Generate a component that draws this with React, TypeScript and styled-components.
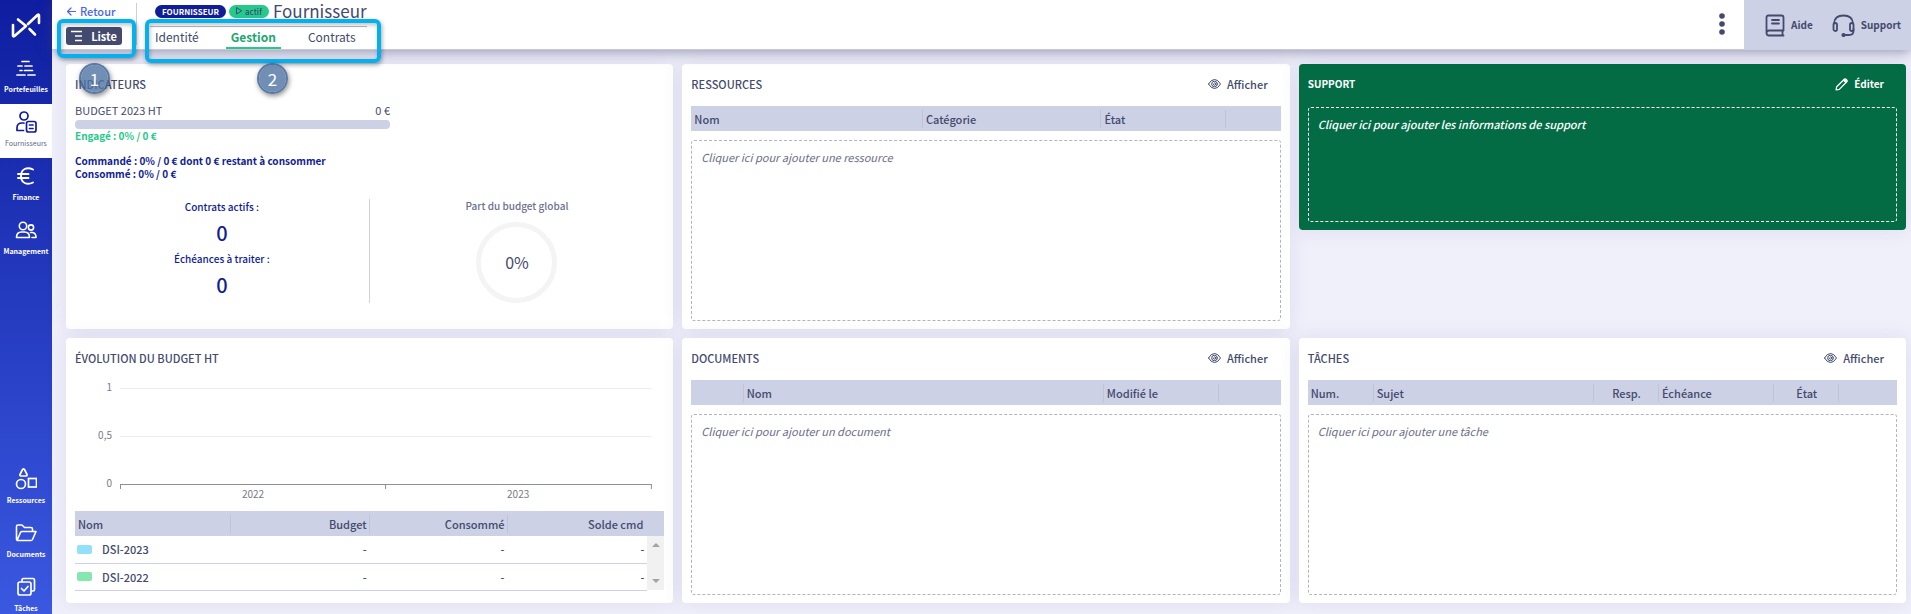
import React from "react";
import styled, { createGlobalStyle, css } from "styled-components";

const ink = "#434a6d";
const navy = "#101d96";
const green = "#27c98a";
const lavender = "#cdd1e6";

const GlobalStyle = createGlobalStyle`
  *, *::before, *::after { box-sizing: border-box; }
  body {
    margin: 0;
    background: #f0f0fb;
    color: ${ink};
    font-family: "Noto Sans CJK SC", "Noto Sans", sans-serif;
    font-size: 11px;
    line-height: 16px;
  }
  button { font: inherit; color: inherit; background: none; border: 0; padding: 0; cursor: pointer; }
  a { color: inherit; text-decoration: none; }
  h1, h2, p, dl, dd { margin: 0; font-weight: 400; }
  svg { display: block; flex: none; }
`;

const Page = styled.div`
  display: flex;
  min-height: 100vh;
`;

/* ---------- Sidebar ---------- */

const Sidebar = styled.nav`
  width: 52px;
  flex: none;
  display: flex;
  flex-direction: column;
  background: linear-gradient(#0f1ea0, #3a58e0);
`;

const LogoLink = styled.a`
  height: 50px;
  display: flex;
  align-items: center;
  justify-content: center;
`;

const NavGroup = styled.div<{ $bottom?: boolean }>`
  display: flex;
  flex-direction: column;
  ${(p) => p.$bottom && css`
    margin-top: auto;
    a:last-child { height: 45px; }
  `}
`;

const NavItem = styled.a<{ $active?: boolean }>`
  height: 54px;
  padding-top: 7px;
  display: flex;
  flex-direction: column;
  align-items: center;
  gap: 4px;
  font-size: 7px;
  line-height: 12px;
  font-weight: ${(p) => (p.$active ? 400 : 700)};
  color: ${(p) => (p.$active ? "#5d648a" : "#fff")};
  background: ${(p) => (p.$active ? "#fff" : "transparent")};
  svg { color: ${(p) => (p.$active ? navy : "#fff")}; }
`;

/* ---------- Header ---------- */

const Body = styled.div`
  flex: 1;
  min-width: 0;
  display: flex;
  flex-direction: column;
`;

const Header = styled.header`
  position: relative;
  z-index: 1;
  height: 50px;
  display: flex;
  background: #fff;
  border-bottom: 1px solid #c9c9d8;
  box-shadow: 0 2px 12px rgba(60, 60, 110, 0.5);
`;

const BackColumn = styled.div`
  width: 85px;
  margin: 3px 0 4px;
  padding-left: 14px;
  display: flex;
  flex-direction: column;
  align-items: flex-start;
  justify-content: space-between;
  border-right: 1px solid #cfcfd8;
`;

const BackLink = styled.a`
  display: flex;
  align-items: center;
  gap: 4px;
  padding-left: 1px;
  font-weight: 500;
  color: #4a66e8;
`;

const ListButton = styled.button`
  height: 18px;
  width: 56px;
  display: flex;
  align-items: center;
  justify-content: center;
  gap: 8px;
  border-radius: 3px;
  background: ${ink};
  color: #fff;
  font-weight: 700;
`;

const TitleColumn = styled.div`
  padding-left: 13px;
  display: flex;
  flex-direction: column;
`;

const TitleRow = styled.div`
  height: 27px;
  padding: 0 0 4px 5px;
  display: flex;
  align-items: center;
  gap: 3px;
  border-bottom: 1px solid #b9b9c0;
`;

const Badge = styled.span<{ $green?: boolean }>`
  height: 13px;
  padding: 0 7px;
  display: flex;
  align-items: center;
  gap: 3px;
  border-radius: 7px;
  font-size: 8px;
  line-height: 13px;
  font-weight: ${(p) => (p.$green ? 500 : 700)};
  color: ${(p) => (p.$green ? "#32507a" : "#fff")};
  background: ${(p) => (p.$green ? green : navy)};
`;

const Title = styled.h1`
  padding-left: 1px;
  font-size: 17px;
  line-height: 22px;
`;

const Tabs = styled.nav`
  flex: 1;
  display: flex;
  gap: 22px;
`;

const Tab = styled.a<{ $active?: boolean }>`
  padding: 0 5px;
  display: flex;
  align-items: center;
  line-height: 20px;
  font-size: 12px;
  font-weight: ${(p) => (p.$active ? 700 : 400)};
  color: ${(p) => (p.$active ? "#1ca76f" : ink)};
  border-bottom: 2px solid ${(p) => (p.$active ? green : "transparent")};
`;

const MoreButton = styled.button`
  width: 30px;
  margin: 0 7px 10px auto;
  display: flex;
  flex-direction: column;
  align-items: center;
  padding-top: 13px;
`;

const HelpBar = styled.div`
  width: 167px;
  height: 50px;
  padding: 0 10px 0 21px;
  display: flex;
  align-items: center;
  justify-content: space-between;
  background: ${lavender};
  font-size: 10px;
  font-weight: 700;
`;

const HelpLink = styled.a`
  display: flex;
  align-items: center;
  gap: 6px;
`;

/* ---------- Guide callouts lying over the header ---------- */

const Outline = styled.div<{ $left: number; $width: number; $height: number }>`
  position: absolute;
  top: 19px;
  left: ${(p) => p.$left}px;
  width: ${(p) => p.$width}px;
  height: ${(p) => p.$height}px;
  border: 4px solid #05b0ee;
  border-radius: 6px;
  box-shadow: 1px 2px 4px rgba(0, 0, 0, 0.35), inset 1px 2px 4px rgba(0, 0, 0, 0.25);
  pointer-events: none;
`;

const Step = styled.span<{ $left: number }>`
  position: absolute;
  top: 63px;
  left: ${(p) => p.$left}px;
  width: 31px;
  height: 31px;
  border: 2px solid rgba(62, 97, 146, 0.85);
  border-radius: 50%;
  background: rgba(78, 115, 163, 0.8);
  background-clip: padding-box;
  box-shadow: 1px 2px 5px rgba(0, 0, 0, 0.45);
  color: #fff;
  font-size: 17px;
  line-height: 27px;
  text-align: center;
`;

/* ---------- Cards ---------- */

const Board = styled.main`
  flex: 1;
  padding: 14px 5px 11px 14px;
  display: grid;
  grid-template-columns: repeat(3, minmax(0, 1fr));
  grid-template-rows: 1fr 1fr;
  gap: 9px;
`;

const CardBox = styled.section<{ $support?: boolean }>`
  min-width: 0;
  padding: 10px 9px 8px;
  display: flex;
  flex-direction: column;
  border-radius: 4px;
  background: ${(p) => (p.$support ? "#036c45" : "#fff")};
  color: ${(p) => (p.$support ? "#fff" : ink)};
  align-self: ${(p) => (p.$support ? "start" : "stretch")};
  box-shadow: 0 0 20px rgba(80, 80, 150, 0.12);
`;

const CardHead = styled.div<{ $strong?: boolean }>`
  height: 20px;
  padding-right: 13px;
  display: flex;
  align-items: center;
  justify-content: space-between;
  font-size: ${(p) => (p.$strong ? 10 : 11)}px;
  font-weight: ${(p) => (p.$strong ? 700 : 500)};
  h2 { font: inherit; }
`;

const CardAction = styled.button`
  display: flex;
  align-items: center;
  gap: 6px;
`;

const AddBox = styled.button<{ $support?: boolean }>`
  flex: 1;
  min-height: 115px;
  margin-top: ${(p) => (p.$support ? 13 : 9)}px;
  padding: 8px 9px;
  display: flex;
  align-items: flex-start;
  justify-content: flex-start;
  text-align: left;
  border: 1px dashed ${(p) => (p.$support ? "#fff" : "#b4b4bd")};
  border-radius: 3px;
  font-style: italic;
  font-weight: ${(p) => (p.$support ? 500 : 400)};
  color: ${(p) => (p.$support ? "#fff" : "#696e86")};
`;

const Table = styled.table`
  width: 100%;
  margin-top: 12px;
  table-layout: fixed;
  border-collapse: collapse;
`;

const Th = styled.th<{ $align?: string; $overScroll?: boolean }>`
  height: 25px;
  padding: 0 ${(p) => (p.$overScroll ? 21 : 3)}px 0 3px;
  text-align: ${(p) => p.$align ?? "left"};
  font-weight: 500;
  background: linear-gradient(#bfc4dd, #bfc4dd) right center / 1px 18px no-repeat ${lavender};
  &:last-child { background: ${lavender}; }
`;

const Td = styled.td<{ $align?: string }>`
  height: 27px;
  padding: 0 3px 0 2px;
  text-align: ${(p) => p.$align ?? "left"};
  font-weight: 500;
  border-bottom: 1px solid ${lavender};
`;

const ScrollCell = styled.td`
  padding: 0;
  background: #f1f1f1;
  color: #a3a3a3;
`;

const ScrollTrack = styled.div`
  height: 54px;
  padding: 7px 0;
  display: flex;
  flex-direction: column;
  align-items: center;
  justify-content: space-between;
`;

const SeriesName = styled.span`
  display: flex;
  align-items: center;
  gap: 10px;
`;

const Swatch = styled.span<{ $color: string }>`
  width: 15px;
  height: 9px;
  border-radius: 2px;
  background: ${(p) => p.$color};
`;

/* ---------- Indicators ---------- */

const Budget = styled.div`
  width: 315px;
  margin-top: 9px;
`;

const BudgetLine = styled.div`
  display: flex;
  justify-content: space-between;
  line-height: 15px;
  padding-bottom: 2px;
`;

const BudgetBar = styled.div`
  height: 9px;
  border-radius: 4px;
  background: ${lavender};
`;

const Amounts = styled.p<{ $green?: boolean }>`
  margin-bottom: 12px;
  font-size: 10px;
  line-height: 13px;
  font-weight: 700;
  color: ${(p) => (p.$green ? green : navy)};
`;

const Halves = styled.div`
  margin-top: 7px;
  height: 104px;
  display: grid;
  grid-template-columns: 1fr 1fr;
  font-size: 10px;
  font-weight: 500;
`;

const Counts = styled.dl`
  border-right: 1px solid ${lavender};
  text-align: center;
  color: ${navy};
  font-weight: 500;
  dt { line-height: 16px; }
  dd { font-size: 20px; line-height: 36px; font-weight: 500; }
`;

const Share = styled.div`
  display: flex;
  flex-direction: column;
  align-items: center;
  gap: 10px;
  line-height: 13px;
  color: #6d7190;
`;

const Ring = styled.div`
  width: 81px;
  height: 81px;
  display: flex;
  align-items: center;
  justify-content: center;
  border: 5px solid #f4f4f4;
  border-radius: 50%;
  font-size: 16px;
  font-weight: 400;
  color: ${ink};
`;

const Chart = styled.svg`
  width: 100%;
  height: 135px;
  margin-bottom: -4px;
  font-size: 10px;
  fill: #777a85;
`;

/* ---------- Icons ---------- */

const stroke = { fill: "none", stroke: "currentColor", strokeLinecap: "round", strokeLinejoin: "round" } as const;

const Logo = () => (
  <svg width="30" height="27" viewBox="0 0 30 27" {...stroke} stroke="#fff" strokeWidth="2.6">
    <path d="M2 13v10.500q0 1.500 1.500.5L15 14 7 7.500M17 12 26.500 3q1.500-1 1.500.5V11M18.500 17l5.500 5.500" />
  </svg>
);
const PortfolioIcon = () => (
  <svg width="22" height="22" viewBox="0 0 22 22" {...stroke} strokeWidth="1.700">
    <path d="M7 4.500h7M3 9h4M10 9h7M5 13.500h2M9.500 13.500h8M2 18h8M13 18h7" />
  </svg>
);
const SupplierIcon = () => (
  <svg width="22" height="22" viewBox="0 0 22 22" {...stroke} strokeWidth="1.700">
    <circle cx="9" cy="5" r="4" />
    <path d="M8.500 19.500H2V17q0-5 5-5h2" />
    <rect x="11.500" y="10.500" width="9.500" height="10.500" rx="2" />
    <path d="M14.500 14h3.500M14.500 17.500h3.500" />
  </svg>
);
const EuroIcon = () => (
  <svg width="22" height="22" viewBox="0 0 22 22" {...stroke} strokeWidth="1.900">
    <path d="M18 4.500C12 1.500 6 4 6 11s6 9.500 12 6.500M3 9h10.500M3 13h10.500" />
  </svg>
);
const PeopleIcon = () => (
  <svg width="22" height="22" viewBox="0 0 22 22" {...stroke} strokeWidth="1.600">
    <circle cx="8" cy="7" r="3.700" />
    <path d="M1.500 18.500q0-5.500 5-5.500h3q5 0 5 5.500zM17 18.500h4q0-4.500-3.500-5h-2" />
    <circle cx="16" cy="8.500" r="2.600" />
  </svg>
);
const ShapesIcon = () => (
  <svg width="22" height="22" viewBox="0 0 22 22" {...stroke} strokeWidth="1.700">
    <path d="M7.500 1.500Q8.500.5 9.500 1.500L12 6.500Q12.500 8 11 8H6Q4.500 8 5 6.500z" />
    <circle cx="6" cy="16" r="4.500" />
    <rect x="13.500" y="10.500" width="8" height="8.500" strokeLinejoin="miter" />
  </svg>
);
const FolderIcon = () => (
  <svg width="22" height="22" viewBox="0 0 22 22" {...stroke} strokeWidth="1.600">
    <path d="M1.500 17.500V4.500q0-1.500 1.500-1.500h4l2.500 2.500H16q1.500 0 1.500 1.500v2M2 18.500 5.500 10.500q.5-1 1.500-1H21l-3.500 8q-.5 1-1.500 1z" />
  </svg>
);
const TasksIcon = () => (
  <svg width="22" height="22" viewBox="0 0 22 22" {...stroke} strokeWidth="1.700">
    <rect x="3" y="6" width="13" height="13" rx="2" />
    <path d="M7 5.500V4q0-1.500 1.500-1.500H18q1.500 0 1.500 1.500v9.500q0 1.500-1.500 1.500h-1M6.500 12.500l2.500 2.500 4-4.500" />
  </svg>
);
const EyeIcon = () => (
  <svg width="13" height="12" viewBox="0 0 13 12" {...stroke} strokeWidth="1">
    <path d="M.5 6Q3 1.500 6.500 1.500T12.500 6Q10 10.500 6.500 10.500T.5 6z" />
    <circle cx="6.500" cy="6" r="2.800" />
    <path d="M6.500 4.800a1.200 1.200 0 1 1-1.200 1.200" />
  </svg>
);
const PencilIcon = () => (
  <svg width="13" height="13" viewBox="0 0 13 13" {...stroke} strokeWidth="1.200">
    <path d="M1 12l.7-3.300L8.500 2l2.500 2.500-6.700 6.800z" />
    <path d="M8.500 2l1-1q.7-.5 1.500.2l.8.8q.7.8.2 1.500l-1 1z" fill="currentColor" />
  </svg>
);
const BookIcon = () => (
  <svg width="20" height="23" viewBox="0 0 20 23" {...stroke} strokeWidth="1.800">
    <path d="M18.500 21.500H4q-2.500 0-2.500-2.500V3.500q0-2 2-2h13q2 0 2 2V16.500H4q-2.500 0-2.500 2.500M17.500 17v4M7 6h7M7 9.500h7" />
  </svg>
);
const HeadsetIcon = () => (
  <svg width="23" height="23" viewBox="0 0 23 23" {...stroke} strokeWidth="1.800">
    <path d="M2 9.500Q2.500 1.500 11.500 1.500T21 9.500M21.500 15v2q0 4-4.500 4h-4" />
    <rect x="1.500" y="9" width="3.500" height="8" rx="1.750" />
    <rect x="18" y="9" width="3.500" height="8" rx="1.750" />
    <circle cx="11.500" cy="21" r="1.200" fill="currentColor" />
  </svg>
);
const BackArrow = () => (
  <svg width="9" height="9" viewBox="0 0 9 9" {...stroke} strokeWidth="1.200">
    <path d="M8.500 4.500h-8M4 1 .5 4.500 4 8" />
  </svg>
);
const ListIcon = () => (
  <svg width="12" height="12" viewBox="0 0 12 12" {...stroke} strokeLinecap="butt" strokeWidth="1.500">
    <path d="M0 1.500h11M4 6h7M4 10.500h7" />
  </svg>
);
const PlayIcon = () => (
  <svg width="6" height="8" viewBox="0 0 6 8" {...stroke} strokeWidth="1">
    <path d="M.5 1v6l5-3z" />
  </svg>
);
const DotsIcon = () => (
  <svg width="6" height="22" viewBox="0 0 6 22" fill={ink}>
    <circle cx="3" cy="3" r="2.800" />
    <circle cx="3" cy="11" r="2.800" />
    <circle cx="3" cy="19" r="2.800" />
  </svg>
);
const ScrollArrow = ({ down }: { down?: boolean }) => (
  <svg width="8" height="4" viewBox="0 0 8 4" fill="currentColor">
    <path d={down ? "M0 0h8L4 4z" : "M0 4h8L4 0z"} />
  </svg>
);

/* ---------- Parts ---------- */

type Column = { label: string; width: string; align?: string };

const HeadRow = ({ columns }: { columns: Column[] }) => (
  <>
    <colgroup>
      {columns.map((c, i) => <col key={i} width={c.width} />)}
    </colgroup>
    <thead>
      <tr>{columns.map((c, i) => <Th key={i} scope="col" $align={c.align}>{c.label}</Th>)}</tr>
    </thead>
  </>
);

const ListCard = ({ title, prompt, columns }: { title: string; prompt: string; columns: Column[] }) => (
  <CardBox>
    <CardHead>
      <h2>{title}</h2>
      <CardAction><EyeIcon />Afficher</CardAction>
    </CardHead>
    <Table><HeadRow columns={columns} /></Table>
    <AddBox>{prompt}</AddBox>
  </CardBox>
);

const resourceColumns: Column[] = [
  { label: "Nom", width: "39.3%" },
  { label: "Catégorie", width: "30.3%" },
  { label: "État", width: "21.2%" },
  { label: "", width: "9.2%" },
];
const documentColumns: Column[] = [
  { label: "", width: "8.9%" },
  { label: "Nom", width: "61.1%" },
  { label: "Modifié le", width: "19.5%" },
  { label: "", width: "10.5%" },
];
const taskColumns: Column[] = [
  { label: "Num.", width: "11.2%" },
  { label: "Sujet", width: "37.4%" },
  { label: "Resp.", width: "11%", align: "center" },
  { label: "Échéance", width: "19.6%" },
  { label: "État", width: "11%", align: "center" },
  { label: "", width: "9.8%" },
];
const budgetColumns: Column[] = [
  { label: "Nom", width: "26.4%" },
  { label: "Budget", width: "23.6%", align: "right" },
  { label: "Consommé", width: "23.4%", align: "right" },
];
const series = [
  { name: "DSI-2023", color: "#93e0fc" },
  { name: "DSI-2022", color: "#86e6b0" },
];

const BudgetChart = () => (
  <Chart role="img" aria-label="Évolution du budget">
    <g textAnchor="end">
      <text x="37" y="23">1</text>
      <text x="37" y="71">0,5</text>
      <text x="37" y="119">0</text>
    </g>
    <g stroke="#ebecf6">
      <line x1="45" x2="97.8%" y1="20.500" y2="20.500" />
      <line x1="45" x2="97.8%" y1="68.500" y2="68.500" />
    </g>
    <g stroke="#8d8e9c">
      <line x1="45" x2="97.8%" y1="116.500" y2="116.500" />
      <line x1="45.500" x2="45.500" y1="116" y2="121" />
      <line x1="52.7%" x2="52.7%" y1="116" y2="121" />
      <line x1="97.8%" x2="97.8%" y1="116" y2="121" />
    </g>
    <g textAnchor="middle">
      <text x="30.2%" y="130">2022</text>
      <text x="75.2%" y="130">2023</text>
    </g>
  </Chart>
);

export default function App() {
  return (
    <Page>
      <GlobalStyle />
      <Sidebar>
        <LogoLink href="#" aria-label="Accueil"><Logo /></LogoLink>
        <NavGroup>
          <NavItem href="#"><PortfolioIcon />Portefeuilles</NavItem>
          <NavItem href="#" $active><SupplierIcon />Fournisseurs</NavItem>
          <NavItem href="#"><EuroIcon />Finance</NavItem>
          <NavItem href="#"><PeopleIcon />Management</NavItem>
        </NavGroup>
        <NavGroup $bottom>
          <NavItem href="#"><ShapesIcon />Ressources</NavItem>
          <NavItem href="#"><FolderIcon />Documents</NavItem>
          <NavItem href="#"><TasksIcon />Tâches</NavItem>
        </NavGroup>
      </Sidebar>
      <Body>
        <Header>
          <BackColumn>
            <BackLink href="#"><BackArrow />Retour</BackLink>
            <ListButton><ListIcon />Liste</ListButton>
          </BackColumn>
          <TitleColumn>
            <TitleRow>
              <Badge>FOURNISSEUR</Badge>
              <Badge $green><PlayIcon />actif</Badge>
              <Title>Fournisseur</Title>
            </TitleRow>
            <Tabs>
              <Tab href="#">Identité</Tab>
              <Tab href="#" $active>Gestion</Tab>
              <Tab href="#">Contrats</Tab>
            </Tabs>
          </TitleColumn>
          <MoreButton aria-label="Plus d'actions"><DotsIcon /></MoreButton>
          <HelpBar>
            <HelpLink href="#"><BookIcon />Aide</HelpLink>
            <HelpLink href="#"><HeadsetIcon />Support</HelpLink>
          </HelpBar>
          <Outline $left={5} $width={79} $height={39} />
          <Outline $left={93} $width={236} $height={44} />
          <Step $left={27}>1</Step>
          <Step $left={205}>2</Step>
        </Header>
        <Board>
          <CardBox>
            <CardHead><h2>INDICATEURS</h2></CardHead>
            <Budget>
              <BudgetLine><span>BUDGET 2023 HT</span><span>0 €</span></BudgetLine>
              <BudgetBar />
              <Amounts $green>Engagé : 0% / 0 €</Amounts>
              <Amounts>
                Commandé : 0% / 0 € dont 0 € restant à consommer<br />
                Consommé : 0% / 0 €
              </Amounts>
            </Budget>
            <Halves>
              <Counts>
                <dt>Contrats actifs :</dt>
                <dd>0</dd>
                <dt>Échéances à traiter :</dt>
                <dd>0</dd>
              </Counts>
              <Share>
                Part du budget global
                <Ring>0%</Ring>
              </Share>
            </Halves>
          </CardBox>
          <ListCard title="RESSOURCES" prompt="Cliquer ici pour ajouter une ressource" columns={resourceColumns} />
          <CardBox $support>
            <CardHead $strong>
              <h2>SUPPORT</h2>
              <CardAction><PencilIcon />Éditer</CardAction>
            </CardHead>
            <AddBox $support>Cliquer ici pour ajouter les informations de support</AddBox>
          </CardBox>
          <CardBox>
            <CardHead><h2>ÉVOLUTION DU BUDGET HT</h2></CardHead>
            <BudgetChart />
            <Table>
              <colgroup>
                {budgetColumns.map((c) => <col key={c.label} width={c.width} />)}
                <col />
                <col width="17" />
              </colgroup>
              <thead>
                <tr>
                  {budgetColumns.map((c) => <Th key={c.label} scope="col" $align={c.align}>{c.label}</Th>)}
                  <Th scope="colgroup" colSpan={2} $align="right" $overScroll>Solde cmd</Th>
                </tr>
              </thead>
              <tbody>
                {series.map((s, i) => (
                  <tr key={s.name}>
                    <Td><SeriesName><Swatch $color={s.color} />{s.name}</SeriesName></Td>
                    <Td $align="right">-</Td>
                    <Td $align="right">-</Td>
                    <Td $align="right">-</Td>
                    {i === 0 && (
                      <ScrollCell rowSpan={2}>
                        <ScrollTrack><ScrollArrow /><ScrollArrow down /></ScrollTrack>
                      </ScrollCell>
                    )}
                  </tr>
                ))}
              </tbody>
            </Table>
          </CardBox>
          <ListCard title="DOCUMENTS" prompt="Cliquer ici pour ajouter un document" columns={documentColumns} />
          <ListCard title="TÂCHES" prompt="Cliquer ici pour ajouter une tâche" columns={taskColumns} />
        </Board>
      </Body>
    </Page>
  );
}
